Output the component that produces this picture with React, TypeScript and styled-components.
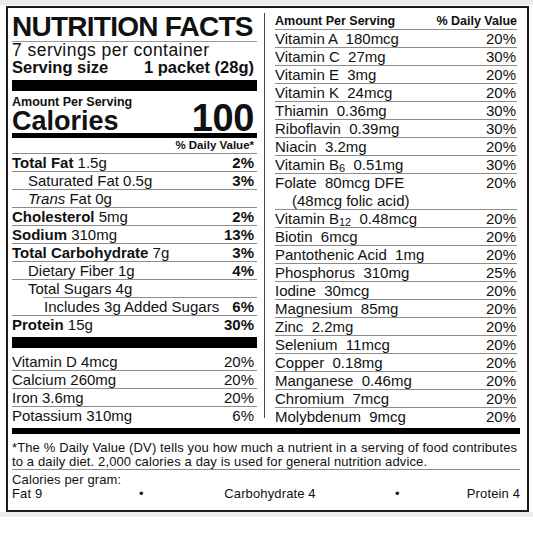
import React from 'react';
import styled, { createGlobalStyle } from 'styled-components';

const GlobalStyle = createGlobalStyle`
  html, body {
    margin: 0;
    padding: 0;
  }
  body {
    background: linear-gradient(#e7edf0 0 5px, #ffffff 5px);
    font-family: "Liberation Sans", Arial, sans-serif;
    color: #111;
  }
`;

const LINE = '#8c8c8c';

const Label = styled.div`
  box-sizing: border-box;
  width: 523px;
  height: 506px;
  margin: 6px 0 0 6px;
  border: 2px solid #1c1c1c;
  padding: 4px 7px 0 4px;
  background: #fff;
`;

const Columns = styled.div`
  display: grid;
  grid-template-columns: 245px 1px 245px;
  column-gap: 7px;
  & > :nth-child(3) {
    margin-left: 3px;
  }
`;

const Column = styled.div`
  display: flex;
  flex-direction: column;
`;

const Divider = styled.div`
  background: #4a4a4a;
  margin: 1px 0 8px;
`;

const Title = styled.div`
  font-size: 28px;
  font-weight: 700;
  line-height: 29px;
  letter-spacing: -0.75px;
  white-space: nowrap;
  border-bottom: 1px solid #9a9a9a;
`;

const Servings = styled.div`
  font-size: 17.5px;
  line-height: 16px;
  letter-spacing: 0.45px;
  white-space: nowrap;
`;

const ServingSize = styled.div`
  display: flex;
  justify-content: space-between;
  padding-right: 3px;
  font-size: 16.5px;
  font-weight: 700;
  line-height: 19px;
  white-space: nowrap;
`;

const Bar = styled.div<{ $h: number; $gap?: number }>`
  height: ${(p) => p.$h}px;
  margin-top: ${(p) => p.$gap ?? 0}px;
  background: #000;
`;

const CaloriesBlock = styled.div`
  display: flex;
  justify-content: space-between;
  align-items: flex-end;
  margin-top: 3px;
  padding-right: 3px;
`;

const SmallHead = styled.div<{ $right?: boolean }>`
  font-size: 12.5px;
  font-weight: 700;
  line-height: 16px;
  text-align: ${(p) => (p.$right ? 'right' : 'left')};
  white-space: nowrap;
`;

const CaloriesLabel = styled.div`
  font-size: 27px;
  font-weight: 700;
  line-height: 23px;
`;

const CaloriesValue = styled.div`
  font-size: 38px;
  font-weight: 700;
  line-height: 30px;
  letter-spacing: -0.4px;
`;

const DvHead = styled.div`
  font-size: 11.5px;
  font-weight: 700;
  line-height: 15px;
  text-align: right;
  padding-right: 3px;
  border-bottom: 1px solid ${LINE};
`;

const HeadRow = styled.div`
  display: flex;
  justify-content: space-between;
  border-bottom: 1px solid ${LINE};
  height: 17px;
  align-items: flex-end;
`;

const Row = styled.div<{
  $indent?: number;
  $inset?: number;
  $noLine?: boolean;
  $tall?: boolean;
  $padRight?: number;
}>`
  box-sizing: border-box;
  display: flex;
  justify-content: space-between;
  height: ${(p) => (p.$tall ? 36 : 18)}px;
  padding-left: ${(p) => (p.$indent ?? 0) * 16}px;
  padding-right: ${(p) => p.$padRight ?? 1}px;
  font-size: 15px;
  line-height: 18px;
  white-space: pre;
  background: ${(p) => (p.$noLine ? 'none' : `linear-gradient(${LINE}, ${LINE}) no-repeat`)};
  background-size: calc(100% - ${(p) => p.$inset ?? 0}px) 1px;
  background-position: right bottom;
`;

const Name = styled.div`
  display: flex;
  flex-direction: column;
`;

const Note = styled.span`
  padding-left: 17px;
`;

const Strong = styled.b`
  font-weight: 700;
`;

const Pct = styled.span<{ $bold?: boolean }>`
  font-weight: ${(p) => (p.$bold ? 700 : 400)};
`;

const Sub = styled.span`
  font-size: 11px;
  position: relative;
  top: 2px;
`;

const VitaminList = styled.div`
  padding-top: 5px;
`;

const Footer = styled.div`
  font-size: 13px;
  line-height: 14px;
  letter-spacing: 0.13px;
  white-space: nowrap;
`;

const FootNote = styled.div`
  padding-top: 7px;
  border-bottom: 1px solid ${LINE};
`;

const PerGram = styled.div`
  padding-top: 3px;
`;

const GramRow = styled.div`
  display: grid;
  grid-template-columns: 127px 6px 1fr 6px 119px;
  & > :nth-child(3) {
    text-align: center;
  }
  & > :nth-child(5) {
    text-align: right;
  }
`;

type Nutrient = {
  label: React.ReactNode;
  amount: string;
  pct?: string;
  bold?: boolean;
  indent?: number;
  inset?: number;
};

const nutrients: Nutrient[] = [
  { label: 'Total Fat', amount: '1.5g', pct: '2%', bold: true },
  { label: 'Saturated Fat', amount: '0.5g', pct: '3%', indent: 1 },
  { label: <><i>Trans</i> Fat</>, amount: '0g', indent: 1 },
  { label: 'Cholesterol', amount: '5mg', pct: '2%', bold: true },
  { label: 'Sodium', amount: '310mg', pct: '13%', bold: true },
  { label: 'Total Carbohydrate', amount: '7g', pct: '3%', bold: true },
  { label: 'Dietary Fiber', amount: '1g', pct: '4%', indent: 1 },
  { label: 'Total Sugars', amount: '4g', indent: 1, inset: 31 },
  { label: 'Includes 3g Added Sugars', amount: '', pct: '6%', indent: 2 },
  { label: 'Protein', amount: '15g', pct: '30%', bold: true },
];

const leftVitamins = [
  ['Vitamin D 4mcg', '20%'],
  ['Calcium 260mg', '20%'],
  ['Iron 3.6mg', '20%'],
  ['Potassium 310mg', '6%'],
];

const rightVitamins: [React.ReactNode, string][] = [
  ['Vitamin A  180mcg', '20%'],
  ['Vitamin C  27mg', '30%'],
  ['Vitamin E  3mg', '20%'],
  ['Vitamin K  24mcg', '20%'],
  ['Thiamin  0.36mg', '30%'],
  ['Riboflavin  0.39mg', '30%'],
  ['Niacin  3.2mg', '20%'],
  [<>Vitamin B<Sub>6</Sub>  0.51mg</>, '30%'],
  ['FOLATE', '20%'],
  [<>Vitamin B<Sub>12</Sub>  0.48mcg</>, '20%'],
  ['Biotin  6mcg', '20%'],
  ['Pantothenic Acid  1mg', '20%'],
  ['Phosphorus  310mg', '25%'],
  ['Iodine  30mcg', '20%'],
  ['Magnesium  85mg', '20%'],
  ['Zinc  2.2mg', '20%'],
  ['Selenium  11mcg', '20%'],
  ['Copper  0.18mg', '20%'],
  ['Manganese  0.46mg', '20%'],
  ['Chromium  7mcg', '20%'],
  ['Molybdenum  9mcg', '20%'],
];

const App: React.FC = () => {
  return (
    <>
      <GlobalStyle />
      <Label>
        <Columns>
          <Column>
            <Title>NUTRITION FACTS</Title>
            <Servings>7 servings per container</Servings>
            <ServingSize>
              <span>Serving size</span>
              <span>1 packet (28g)</span>
            </ServingSize>
            <Bar $h={11} $gap={3} />
            <CaloriesBlock>
              <div>
                <SmallHead>Amount Per Serving</SmallHead>
                <CaloriesLabel>Calories</CaloriesLabel>
              </div>
              <CaloriesValue>100</CaloriesValue>
            </CaloriesBlock>
            <Bar $h={5} />
            <DvHead>% Daily Value*</DvHead>
            {nutrients.map((n, i) => (
              <Row
                key={i}
                $indent={n.indent}
                $inset={n.inset}
                $padRight={3}
                $noLine={i === nutrients.length - 1}
              >
                <span>
                  {n.bold ? <Strong>{n.label}</Strong> : n.label}
                  {n.amount ? ' ' + n.amount : ''}
                </span>
                <Pct $bold>{n.pct}</Pct>
              </Row>
            ))}
            <Bar $h={11} $gap={3} />
            <VitaminList>
              {leftVitamins.map(([name, pct], i) => (
                <Row key={i} $padRight={3} $noLine={i === leftVitamins.length - 1}>
                  <span>{name}</span>
                  <Pct>{pct}</Pct>
                </Row>
              ))}
            </VitaminList>
          </Column>

          <Divider />

          <Column>
            <HeadRow>
              <SmallHead>Amount Per Serving</SmallHead>
              <SmallHead $right>% Daily Value</SmallHead>
            </HeadRow>
            {rightVitamins.map(([name, pct], i) =>
              name === 'FOLATE' ? (
                <Row key={i} $tall>
                  <Name>
                    <span>Folate  80mcg DFE</span>
                    <Note>(48mcg folic acid)</Note>
                  </Name>
                  <Pct>{pct}</Pct>
                </Row>
              ) : (
                <Row key={i} $noLine={i === rightVitamins.length - 1}>
                  <span>{name}</span>
                  <Pct>{pct}</Pct>
                </Row>
              )
            )}
          </Column>
        </Columns>

        <Bar $h={6} $gap={2} />
        <Footer>
          <FootNote>
            *The % Daily Value (DV) tells you how much a nutrient in a serving of food contributes
            <br />
            to a daily diet. 2,000 calories a day is used for general nutrition advice.
          </FootNote>
          <PerGram>Calories per gram:</PerGram>
          <GramRow>
            <span>Fat 9</span>
            <span>•</span>
            <span>Carbohydrate 4</span>
            <span>•</span>
            <span>Protein 4</span>
          </GramRow>
        </Footer>
      </Label>
    </>
  );
};

export default App;
